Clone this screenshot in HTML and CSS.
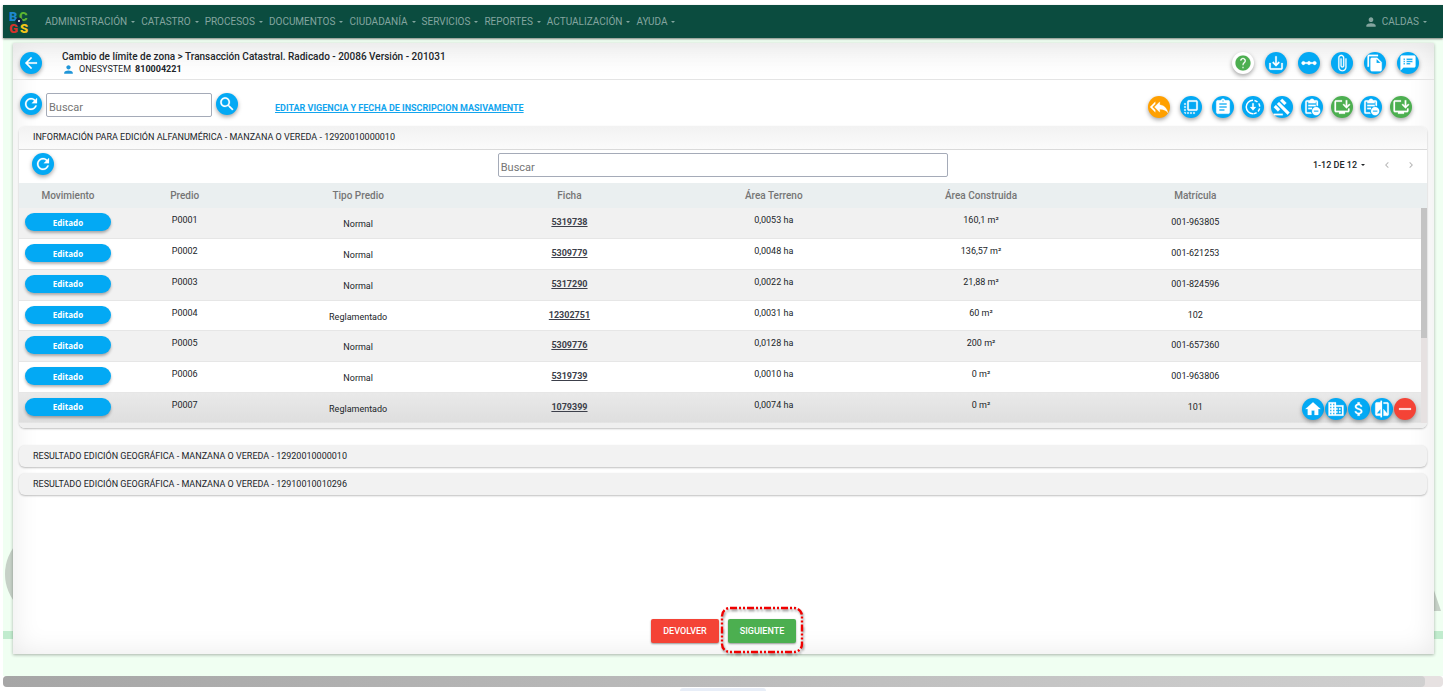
FILE: index.html
```
<!DOCTYPE html>
<html lang="es">
<head>
	<meta charset="UTF-8">
	<meta name="viewport" content="width=device-width, initial-scale=1">
	<title>Cambio de límite de zona</title>
	<link rel="stylesheet" href="styles.css">
</head>
<body>
<svg class="sprite" aria-hidden="true">
	<symbol id="i-back" viewBox="0 0 24 24"><path d="M20 11H7.83l5.59-5.59L12 4l-8 8 8 8 1.41-1.41L7.83 13H20v-2z"/></symbol>
	<symbol id="i-refresh" viewBox="0 0 24 24"><path d="M17.65 6.35C16.2 4.9 14.21 4 12 4c-4.42 0-7.99 3.58-7.99 8s3.57 8 7.99 8c3.73 0 6.84-2.55 7.73-6h-2.08c-.82 2.33-3.04 4-5.65 4-3.31 0-6-2.69-6-6s2.69-6 6-6c1.66 0 3.14.69 4.22 1.78L13 11h7V4l-2.35 2.35z"/></symbol>
	<symbol id="i-search" viewBox="0 0 24 24"><path d="M15.5 14h-.79l-.28-.27C15.41 12.59 16 11.11 16 9.5 16 5.91 13.09 3 9.5 3S3 5.91 3 9.5 5.91 16 9.5 16c1.61 0 3.09-.59 4.23-1.57l.27.28v.79l5 4.99L20.49 19l-4.99-5zm-6 0C7.01 14 5 11.99 5 9.5S7.01 5 9.5 5 14 7.01 14 9.5 11.99 14 9.5 14z"/></symbol>
	<symbol id="i-person" viewBox="0 0 24 24"><path d="M12 12c2.21 0 4-1.79 4-4s-1.79-4-4-4-4 1.79-4 4 1.79 4 4 4zm0 2c-2.67 0-8 1.34-8 4v2h16v-2c0-2.66-5.33-4-8-4z"/></symbol>
	<symbol id="i-help" viewBox="0 0 24 24"><path d="M12 2C6.48 2 2 6.48 2 12s4.48 10 10 10 10-4.48 10-10S17.52 2 12 2zm1 17h-2v-2h2v2zm2.07-7.75l-.9.92C13.45 12.9 13 13.5 13 15h-2v-.5c0-1.1.45-2.1 1.17-2.83l1.24-1.26c.37-.36.59-.86.59-1.41 0-1.1-.9-2-2-2s-2 .9-2 2H8c0-2.21 1.79-4 4-4s4 1.79 4 4c0 .88-.36 1.68-.93 2.25z"/></symbol>
	<symbol id="i-save" viewBox="0 0 24 24"><path d="M19 12v7H5v-7H3v7c0 1.1.9 2 2 2h14c1.1 0 2-.9 2-2v-7h-2zm-6 .67l2.59-2.58L17 11.5l-5 5-5-5 1.41-1.41L11 12.67V3h2z"/></symbol>
	<symbol id="i-scale" viewBox="0 0 24 24"><path d="M19.5 9.5c-1.03 0-1.9.62-2.29 1.5h-2.92c-.39-.88-1.26-1.5-2.29-1.5s-1.9.62-2.29 1.5H6.79c-.39-.88-1.26-1.5-2.29-1.5C3.12 9.5 2 10.62 2 12s1.12 2.5 2.5 2.5c1.03 0 1.9-.62 2.29-1.5h2.92c.39.88 1.26 1.5 2.29 1.5s1.9-.62 2.29-1.5h2.92c.39.88 1.26 1.5 2.29 1.5 1.38 0 2.5-1.12 2.5-2.5s-1.12-2.5-2.5-2.5z"/></symbol>
	<symbol id="i-attach" viewBox="0 0 24 24"><path d="M16.5 6v11.5c0 2.21-1.79 4-4 4s-4-1.79-4-4V5c0-1.38 1.12-2.5 2.5-2.5s2.5 1.12 2.5 2.5v10.5c0 .55-.45 1-1 1s-1-.45-1-1V6H10v9.5c0 1.38 1.12 2.5 2.5 2.5s2.5-1.12 2.5-2.5V5c0-2.21-1.79-4-4-4S7 2.79 7 5v12.5c0 3.04 2.46 5.5 5.5 5.5s5.5-2.46 5.5-5.5V6h-1.5z"/></symbol>
	<symbol id="i-copy" viewBox="0 0 24 24"><path d="M16 1H4c-1.1 0-2 .9-2 2v14h2V3h12V1zm-1 4l6 6v10c0 1.1-.9 2-2 2H7.99C6.89 23 6 22.1 6 21l.01-14c0-1.1.89-2 1.99-2h7zm-1 7h5.5L14 6.5V12z"/></symbol>
	<symbol id="i-notes" viewBox="0 0 24 24"><path d="M20 2H4c-1.1 0-1.99.9-1.99 2L2 22l4-4h14c1.1 0 2-.9 2-2V4c0-1.1-.9-2-2-2zM8 14H6v-2h2v2zm0-3H6V9h2v2zm0-3H6V6h2v2zm7 6h-5v-2h5v2zm3-3h-8V9h8v2zm0-3h-8V6h8v2z"/></symbol>
	<symbol id="i-reply-all" viewBox="0 0 24 24"><path d="M7 8V5l-7 7 7 7v-3l-4-4 4-4zm6 1V5l-7 7 7 7v-4.1c5 0 8.500 1.6 11 5.100-1-5-4-10-11-11z"/></symbol>
	<symbol id="i-front" viewBox="0 0 24 24"><path d="M3 13h2v-2H3v2zm0 4h2v-2H3v2zm2 4v-2H3c0 1.1.89 2 2 2zM3 9h2V7H3v2zm12 12h2v-2h-2v2zm4-18H9c-1.11 0-2 .9-2 2v10c0 1.1.89 2 2 2h10c1.1 0 2-.9 2-2V5c0-1.1-.9-2-2-2zm0 12H9V5h10v10zm-8 6h2v-2h-2v2zm-4 0h2v-2H7v2z"/></symbol>
	<symbol id="i-assignment" viewBox="0 0 24 24"><path d="M19 3h-4.18C14.4 1.84 13.3 1 12 1c-1.3 0-2.4.84-2.82 2H5c-1.1 0-2 .9-2 2v14c0 1.1.9 2 2 2h14c1.1 0 2-.9 2-2V5c0-1.1-.9-2-2-2zm-7 0c.55 0 1 .45 1 1s-.45 1-1 1-1-.45-1-1 .45-1 1-1zm2 14H7v-2h7v2zm3-4H7v-2h10v2zm0-4H7V7h10v2z"/></symbol>
	<symbol id="i-downloading" viewBox="0 0 24 24"><path d="M12 3a9 9 0 0 0 0 18" fill="none" stroke="currentColor" stroke-width="2"/><path d="M12 3a9 9 0 0 1 0 18" fill="none" stroke="currentColor" stroke-width="2" stroke-dasharray="4.5 2.5" stroke-dashoffset="-2"/><path d="M16 12l-4 4.500-4-4.500h3V7h2v5z"/></symbol>
	<symbol id="i-gavel" viewBox="0 0 24 24"><path d="M1 21h12v2H1zM5.245 8.07l2.83-2.827 14.14 14.142-2.828 2.828zM12.317 1l5.657 5.656-2.83 2.83-5.654-5.66zM3.825 9.485l5.657 5.657-2.828 2.828-5.657-5.657z"/></symbol>
	<symbol id="i-assignment-minus" viewBox="0 0 24 24"><path d="M18 3h-3.200a3 3 0 0 0-5.600 0H5a2 2 0 0 0-2 2v14a2 2 0 0 0 2 2h6.500a7 7 0 0 1-1-2H5V5h2v2h10V5h1v5.100a7 7 0 0 1 2 .6V5a2 2 0 0 0-2-2zM7 9h10v2H7zM7 13h5v2H7z"/><path fill-rule="evenodd" d="M17.500 12a5.500 5.500 0 1 0 0 11 5.500 5.500 0 0 0 0-11zM14.500 16.700h6v1.600h-6z"/></symbol>
	<symbol id="i-install" viewBox="0 0 24 24"><path d="M20 17H4V5h8V3H4c-1.100 0-2 .9-2 2v12c0 1.100.9 2 2 2h4v2h8v-2h4c1.100 0 2-.9 2-2v-3h-2v3z"/><path d="M18 14l5-5-1.410-1.410L19 10.170V3h-2v7.170l-2.590-2.580L13 9z"/></symbol>
	<symbol id="i-home" viewBox="0 0 24 24"><path d="M10 20v-6h4v6h5v-8h3L12 3 2 12h3v8z"/></symbol>
	<symbol id="i-business" viewBox="0 0 24 24"><path d="M12 7V3H2v18h20V7H12zM6 19H4v-2h2v2zm0-4H4v-2h2v2zm0-4H4V9h2v2zm0-4H4V5h2v2zm4 12H8v-2h2v2zm0-4H8v-2h2v2zm0-4H8V9h2v2zm0-4H8V5h2v2zm10 12h-8v-2h2v-2h-2v-2h2v-2h-2V9h8v10zm-2-8h-2v2h2v-2zm0 4h-2v2h2v-2z"/></symbol>
	<symbol id="i-money" viewBox="0 0 24 24"><path d="M11.8 10.9c-2.27-.59-3-1.2-3-2.15 0-1.09 1.01-1.85 2.7-1.85 1.78 0 2.44.85 2.5 2.1h2.21c-.07-1.72-1.12-3.3-3.21-3.81V3h-3v2.16c-1.94.42-3.5 1.68-3.5 3.61 0 2.31 1.91 3.46 4.7 4.13 2.5.6 3 1.48 3 2.41 0 .69-.49 1.79-2.7 1.79-2.06 0-2.87-.92-2.98-2.1h-2.2c.12 2.19 1.76 3.42 3.68 3.83V21h3v-2.15c1.95-.37 3.5-1.5 3.5-3.55 0-2.84-2.43-3.81-4.7-4.4z"/></symbol>
	<symbol id="i-compare" viewBox="0 0 24 24"><path d="M10 3H5c-1.1 0-2 .9-2 2v14c0 1.1.9 2 2 2h5v2h2V1h-2v2zm0 15H5l5-6v6zm9-15h-5v2h5v13l-5-6v9h5c1.1 0 2-.9 2-2V5c0-1.100-.9-2-2-2z"/></symbol>
	<symbol id="i-minus" viewBox="0 0 24 24"><path d="M20 13H4v-2h16v2z"/></symbol>
	<symbol id="i-left" viewBox="0 0 24 24"><path d="M15.41 7.41L14 6l-6 6 6 6 1.410-1.410L10.830 12z"/></symbol>
	<symbol id="i-right" viewBox="0 0 24 24"><path d="M10 6L8.590 7.410 13.170 12l-4.580 4.590L10 18l6-6z"/></symbol>
</svg>

<header class="navbar">
	<a class="logo" href="#" aria-label="BCGS">
		<svg viewBox="0 0 22 24">
			<g font-family="Roboto, sans-serif" font-weight="900" font-size="13">
				<text x="1" y="11" fill="#1e88d0">B</text>
				<text x="11" y="11" fill="#5cb531">C</text>
				<text x="1" y="23" fill="#d8312b">G</text>
				<text x="12" y="23" fill="#f5c518">S</text>
			</g>
			<path d="M11 17l-3-4a3.500 3.500 0 1 1 6 0z" fill="#0d2440"/>
			<circle cx="11" cy="11" r="1" fill="#fff"/>
		</svg>
	</a>
	<nav class="menu">
		<a href="#">ADMINISTRACIÓN</a>
		<a href="#">CATASTRO</a>
		<a href="#">PROCESOS</a>
		<a href="#">DOCUMENTOS</a>
		<a href="#">CIUDADANÍA</a>
		<a href="#">SERVICIOS</a>
		<a href="#">REPORTES</a>
		<a href="#">ACTUALIZACIÓN</a>
		<a href="#">AYUDA</a>
	</nav>
	<a class="user" href="#"><svg><use href="#i-person"/></svg>CALDAS</a>
</header>

<main class="stage">
	<div class="backdrop" aria-hidden="true">
		<svg class="mark-left" viewBox="0 0 92 92"><circle cx="46" cy="46" r="46"/></svg>
		<svg class="mark-right" viewBox="0 0 20 50"><path d="M0 0h3l17 50H0z"/></svg>
	</div>

	<div class="card">
		<div class="card-head">
			<button class="round" aria-label="Volver"><svg><use href="#i-back"/></svg></button>
			<div class="crumbs">
				<h1>Cambio de límite de zona <span class="sep">&gt;</span> Transacción Catastral. Radicado - 20086 Versión - 201031</h1>
				<p><svg><use href="#i-person"/></svg>ONESYSTEM <b>810004221</b></p>
			</div>
			<div class="head-actions">
				<button class="round white" aria-label="Ayuda"><svg><use href="#i-help"/></svg></button>
				<button class="round" aria-label="Descargar"><svg><use href="#i-save"/></svg></button>
				<button class="round" aria-label="Flujo"><svg><use href="#i-scale"/></svg></button>
				<button class="round" aria-label="Adjuntos"><svg><use href="#i-attach"/></svg></button>
				<button class="round" aria-label="Documentos"><svg><use href="#i-copy"/></svg></button>
				<button class="round" aria-label="Observaciones"><svg><use href="#i-notes"/></svg></button>
			</div>
		</div>

		<div class="tools">
			<div class="find">
				<button class="round" aria-label="Recargar"><svg><use href="#i-refresh"/></svg></button>
				<input type="text" placeholder="Buscar" aria-label="Buscar">
				<button class="round" aria-label="Buscar"><svg><use href="#i-search"/></svg></button>
			</div>
			<div class="mass-edit"><a href="#">EDITAR VIGENCIA Y FECHA DE INSCRIPCION MASIVAMENTE</a></div>
			<div class="tool-actions">
				<button class="round orange" aria-label="Devolver todo"><svg><use href="#i-reply-all"/></svg></button>
				<button class="round" aria-label="Traer al frente"><svg><use href="#i-front"/></svg></button>
				<div class="tool-group">
					<button class="round" aria-label="Asignación"><svg><use href="#i-assignment"/></svg></button>
					<button class="round" aria-label="Descargando"><svg><use href="#i-downloading"/></svg></button>
					<button class="round" aria-label="Resolución"><svg><use href="#i-gavel"/></svg></button>
					<button class="round" aria-label="Quitar asignación"><svg><use href="#i-assignment-minus"/></svg></button>
					<button class="round green" aria-label="Instalar"><svg><use href="#i-install"/></svg></button>
					<button class="round" aria-label="Quitar reporte"><svg><use href="#i-assignment-minus"/></svg></button>
					<button class="round green" aria-label="Descargar reporte"><svg><use href="#i-install"/></svg></button>
				</div>
			</div>
		</div>

		<section class="panel open">
			<h2>INFORMACIÓN PARA EDICIÓN ALFANUMÉRICA - MANZANA O VEREDA - 12920010000010</h2>
			<div class="panel-tools">
				<button class="round" aria-label="Recargar tabla"><svg><use href="#i-refresh"/></svg></button>
				<input type="text" placeholder="Buscar" aria-label="Buscar en la tabla">
				<div class="pager">
					<button class="pages">1-12 DE 12</button>
					<button class="step" aria-label="Anterior" disabled><svg><use href="#i-left"/></svg></button>
					<button class="step" aria-label="Siguiente página" disabled><svg><use href="#i-right"/></svg></button>
				</div>
			</div>
			<div class="table-wrap">
				<table>
					<colgroup>
						<col class="c-mov"><col class="c-predio"><col class="c-mid"><col class="c-mid"><col class="c-terr"><col class="c-cons"><col class="c-mid"><col class="c-act">
					</colgroup>
					<thead>
						<tr><th>Movimiento</th><th>Predio</th><th>Tipo Predio</th><th>Ficha</th><th>Área Terreno</th><th>Área Construida</th><th>Matrícula</th><th></th></tr>
					</thead>
					<tbody>
						<tr><td class="mov"><button class="pill">Editado</button></td><td>P0001</td><td class="kind">Normal</td><td class="ficha"><a href="#">5319738</a></td><td>0,0053 ha</td><td>160,1 m²</td><td class="mat">001-963805</td><td></td></tr>
						<tr><td class="mov"><button class="pill">Editado</button></td><td>P0002</td><td class="kind">Normal</td><td class="ficha"><a href="#">5309779</a></td><td>0,0048 ha</td><td>136,57 m²</td><td class="mat">001-621253</td><td></td></tr>
						<tr><td class="mov"><button class="pill">Editado</button></td><td>P0003</td><td class="kind">Normal</td><td class="ficha"><a href="#">5317290</a></td><td>0,0022 ha</td><td>21,88 m²</td><td class="mat">001-824596</td><td></td></tr>
						<tr><td class="mov"><button class="pill">Editado</button></td><td>P0004</td><td class="kind">Reglamentado</td><td class="ficha"><a href="#">12302751</a></td><td>0,0031 ha</td><td>60 m²</td><td class="mat">102</td><td></td></tr>
						<tr><td class="mov"><button class="pill">Editado</button></td><td>P0005</td><td class="kind">Normal</td><td class="ficha"><a href="#">5309776</a></td><td>0,0128 ha</td><td>200 m²</td><td class="mat">001-657360</td><td></td></tr>
						<tr><td class="mov"><button class="pill">Editado</button></td><td>P0006</td><td class="kind">Normal</td><td class="ficha"><a href="#">5319739</a></td><td>0,0010 ha</td><td>0 m²</td><td class="mat">001-963806</td><td></td></tr>
						<tr class="active"><td class="mov"><button class="pill">Editado</button></td><td>P0007</td><td class="kind">Reglamentado</td><td class="ficha"><a href="#">1079399</a></td><td>0,0074 ha</td><td>0 m²</td><td class="mat">101</td>
							<td class="mov"><div class="row-actions">
								<button class="round" aria-label="Predio"><svg><use href="#i-home"/></svg></button>
								<button class="round" aria-label="Construcciones"><svg><use href="#i-business"/></svg></button>
								<button class="round" aria-label="Avalúo"><svg><use href="#i-money"/></svg></button>
								<button class="round" aria-label="Comparar"><svg><use href="#i-compare"/></svg></button>
								<button class="round red" aria-label="Eliminar"><svg><use href="#i-minus"/></svg></button>
							</div></td></tr>
					</tbody>
				</table>
				<div class="v-track"><div class="v-thumb"></div></div>
			</div>
		</section>

		<section class="panel"><h2>RESULTADO EDICIÓN GEOGRÁFICA - MANZANA O VEREDA - 12920010000010</h2></section>
		<section class="panel"><h2>RESULTADO EDICIÓN GEOGRÁFICA - MANZANA O VEREDA - 12910010010296</h2></section>

		<div class="footer-actions">
			<button class="btn red">DEVOLVER</button>
			<div class="marked">
				<button class="btn green">SIGUIENTE</button>
				<svg class="outline" viewBox="0 0 84 48"><rect x="2" y="2" width="80" height="44" rx="8"/></svg>
			</div>
		</div>
	</div>
</main>

<div class="h-track"><div class="h-thumb"></div></div>
<div class="below"></div>
</body>
</html>
```

FILE: styles.css
```
* {
	box-sizing: border-box;
	margin: 0;
	padding: 0;
}

body {
	font-family: Roboto, sans-serif;
	font-size: 10px;
	color: #212529;
	background: #fff;
	min-height: 100vh;
	display: flex;
	flex-direction: column;
	padding: 5px 0 0 3px;
	overflow: hidden;
}

button {
	font-family: inherit;
	border: 0;
	cursor: pointer;
}

svg {
	fill: currentColor;
	display: block;
}

.sprite {
	position: absolute;
	width: 0;
	height: 0;
}

/* navbar */
.navbar {
	display: flex;
	align-items: center;
	height: 33px;
	padding: 0 16px 0 5px;
	background: #0b4c3f;
	box-shadow: 0 1px 2px rgba(0,0,0,0.5);
	position: relative;
	z-index: 2;
}

.logo svg {
	width: 22px;
	height: 24px;
	overflow: visible;
}

.menu {
	display: flex;
	gap: 6px;
	margin-left: 15px;
	flex: 1;
}

.menu a,
.user {
	color: #84a59f;
	text-decoration: none;
	line-height: 16px;
	display: flex;
	align-items: center;
}

.menu a::after,
.user::after,
.pages::after {
	content: '';
	border: 2px solid transparent;
	border-top-color: currentColor;
	border-bottom: 0;
	margin-left: 4px;
}

.user svg {
	width: 14px;
	height: 14px;
	margin-right: 4px;
}

/* stage and the faded logo behind the card */
.stage {
	flex: 1;
	display: flex;
	position: relative;
	background: #f0fff2;
	padding: 5px 9px 22px 10px;
}

.backdrop {
	position: absolute;
	inset: 0;
	overflow: hidden;
	color: #c6d1c7;
}

.backdrop::after {
	content: '';
	position: absolute;
	left: 0;
	right: 0;
	bottom: 37px;
	height: 8px;
	background: #c1ecce;
}

.mark-left {
	position: absolute;
	left: 2px;
	bottom: 56px;
	width: 92px;
	height: 92px;
}

.mark-right {
	position: absolute;
	right: 2px;
	bottom: 65px;
	width: 20px;
	height: 50px;
}

.card {
	flex: 1;
	min-width: 0;
	display: flex;
	flex-direction: column;
	position: relative;
	background: #fff;
	box-shadow: 0 1px 3px rgba(0,0,0,0.3), inset 0 0 28px rgba(0,0,0,0.09);
}

.card-head {
	display: flex;
	align-items: center;
	height: 37px;
	padding: 4px 15px 0 7px;
	border-bottom: 1px solid #e4e4e4;
	background: linear-gradient(rgba(0,0,0,0.03), transparent);
}

.crumbs {
	flex: 1;
	margin-left: 20px;
}

.crumbs h1 {
	font-size: 10px;
	font-weight: 500;
	line-height: 13px;
}

.crumbs p {
	display: flex;
	align-items: center;
	gap: 4px;
	font-size: 9px;
	line-height: 13px;
}

.crumbs p svg {
	width: 13px;
	height: 13px;
	color: #2196d8;
}

.round {
	width: 22px;
	height: 22px;
	flex: none;
	border-radius: 50%;
	display: flex;
	align-items: center;
	justify-content: center;
	color: #fff;
	background: #03a9f4;
	box-shadow: 0 2px 4px rgba(0,0,0,0.35);
}

.round svg {
	width: 18px;
	height: 18px;
	stroke: currentColor;
	stroke-width: 0.3;
}

.white {
	background: #fff;
	color: #4caf50;
}

.orange { background: #ffa000; }
.green { background: #4caf50; }
.red { background: #f44336; }

.head-actions {
	display: flex;
	gap: 11px;
}

/* search and toolbar */
.tools {
	display: flex;
	height: 46px;
	padding: 13px 22px 0 7px;
}

.find {
	display: flex;
	gap: 4px;
}

input {
	height: 24px;
	border: 1px solid #a5abb8;
	border-radius: 2px;
	font-family: Roboto, sans-serif;
	font-size: 11px;
	padding: 4px 2px 0;
	background: #fff;
}

input::placeholder {
	color: #757575;
}

.find input {
	width: 166px;
}

.mass-edit {
	margin: 7px 0 0 37px;
	flex: 1;
	font-size: 9px;
	font-weight: 700;
	line-height: 16px;
}

.mass-edit a {
	color: #12a5ee;
}

.tool-actions {
	display: flex;
	gap: 10px;
	padding-top: 3px;
}

.tool-group {
	display: flex;
	justify-content: space-between;
	width: 200px;
}

/* panels */
.panel {
	margin: 0 7px 6px 6px;
	border-radius: 6px;
	background: #f2f2f2;
	box-shadow: 0 1px 2px rgba(0,0,0,0.25);
}

.panel h2 {
	font-size: 9px;
	font-weight: 400;
	line-height: 22px;
	padding-left: 14px;
}

.open {
	margin-bottom: 17px;
	background: #fff;
	overflow: hidden;
}

.open h2 {
	line-height: 23px;
	border-bottom: 1px solid #dadada;
	background: linear-gradient(#f2f2f2, #fbfbfb);
}

.panel-tools {
	display: grid;
	grid-template-columns: 1fr 32% 1fr;
	padding: 3px 0 6px;
}

.panel-tools .round {
	margin-left: 13px;
}

.pager {
	display: flex;
	align-items: center;
	justify-content: flex-end;
	gap: 12px;
	padding-right: 10px;
}

.pages {
	display: flex;
	align-items: center;
	background: none;
	font-size: 9px;
	font-weight: 500;
	color: #212529;
	margin-right: 4px;
}

.step {
	background: none;
	color: #b8b8b8;
}

.step svg {
	width: 12px;
	height: 12px;
}

.table-wrap {
	display: flex;
	background: #eaeff0;
	border-bottom: 5px solid #efefef;
}

table {
	flex: 1;
	table-layout: fixed;
	border-collapse: collapse;
	height: 240px;
}

.c-mov { width: 98px; }
.c-predio { width: 136px; }
.c-mid { width: 212px; }
.c-terr { width: 198px; }
.c-cons { width: 218px; }
.c-act { width: 120px; }

th {
	height: 25px;
	font-size: 10px;
	font-weight: 500;
	color: #757575;
}

td {
	height: 30px;
	padding-top: 4px;
	vertical-align: top;
	text-align: center;
	font-size: 9px;
	line-height: 16px;
	background: #fff;
}

tbody tr:nth-child(odd) td {
	background: #f1f1f1;
}

tbody tr + tr td {
	border-top: 1px solid #e6e6e6;
}

tbody tr.active td {
	background: linear-gradient(#e9e9e9, #dedede);
}

td.mov { padding-top: 5px; }
td.kind { padding-top: 8px; }
td.ficha,
td.mat { padding-top: 6px; }

.ficha a {
	font-weight: 700;
	color: #3c3f4a;
}

.pill {
	width: 86px;
	height: 18px;
	border-radius: 9px;
	background: #03a9f4;
	color: #fff;
	font-family: "Open Sans", sans-serif;
	font-size: 8px;
	font-weight: 700;
	box-shadow: 0 2px 3px rgba(0,0,0,0.3);
}

.row-actions {
	display: flex;
	justify-content: flex-end;
	gap: 1px;
	padding-right: 5px;
}

.v-track {
	width: 6px;
	margin-top: 25px;
	background: #e6e1e1;
}

.v-thumb {
	height: 130px;
	background: #c4c4c4;
}

/* bottom buttons */
.footer-actions {
	display: flex;
	justify-content: center;
	gap: 9px;
	margin-top: auto;
	padding-bottom: 11px;
}

.btn {
	height: 24px;
	width: 68px;
	border-radius: 2px;
	color: #fff;
	font-size: 9px;
	font-weight: 500;
	box-shadow: 0 1px 2px rgba(0,0,0,0.4);
}

.marked {
	position: relative;
}

.outline {
	position: absolute;
	left: -8px;
	top: -13px;
	width: 84px;
	height: 48px;
	fill: none;
	stroke: #f00000;
	stroke-width: 2.4;
	stroke-dasharray: 7 2 2 2 2 2;
	filter: drop-shadow(1px 2px 1px rgba(0,0,0,0.4));
	pointer-events: none;
}

/* page scrollbar */
.h-track {
	height: 11px;
	border-radius: 4px;
	background: #e6e1e1;
	padding-right: 18px;
}

.h-thumb {
	height: 11px;
	border-radius: 4px;
	background: linear-gradient(90deg, #a6a6a6, #d0d0d0);
}

.below {
	width: 86px;
	height: 3px;
	margin: 1px auto 0;
	border-radius: 4px 4px 0 0;
	background: #e8eef8;
}
```
